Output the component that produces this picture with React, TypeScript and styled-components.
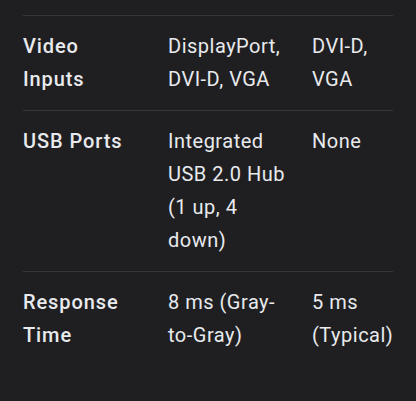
import React from "react";
import styled, { createGlobalStyle } from "styled-components";

const Global = createGlobalStyle`
  html, body { margin: 0; padding: 0; background: #1f1f22; }
  body { font-family: Roboto, "Noto Sans", Arial, sans-serif; }
`;

const Page = styled.div`
  width: 416px;
  height: 401px;
  background: #1f1f22;
  padding: 15px 23px 0 23px;
  box-sizing: border-box;
  overflow: hidden;
`;

const Table = styled.div`
  display: flex;
  flex-direction: column;
`;

const Row = styled.div`
  display: grid;
  grid-template-columns: 145px 144px 82px;
  border-top: 1px solid #35363a;
  padding: 14px 0 14px;
  font-size: 20px;
  line-height: 33px;
  color: #e8eaed;
`;

const Label = styled.div`
  font-weight: 500;
  letter-spacing: 0.9px;
  padding-right: 30px;
`;

const Cell = styled.div<{ $pad: number }>`
  font-weight: 400;
  letter-spacing: 0.5px;
  padding-right: ${(p) => p.$pad}px;
`;

const rows: [string, string, string][] = [
  ["Video Inputs", "DisplayPort, DVI-D, VGA", "DVI-D, VGA"],
  ["USB Ports", "Integrated USB 2.0 Hub (1 up, 4 down)", "None"],
  ["Response Time", "8 ms (Gray-to-Gray)", "5 ms (Typical)"],
];

export default function App() {
  return (
    <>
      <Global />
      <Page>
        <Table>
          {rows.map(([l, a, b]) => (
            <Row key={l}>
              <Label>{l}</Label>
              <Cell $pad={16}>{a}</Cell>
              <Cell $pad={0}>{b}</Cell>
            </Row>
          ))}
        </Table>
      </Page>
    </>
  );
}
